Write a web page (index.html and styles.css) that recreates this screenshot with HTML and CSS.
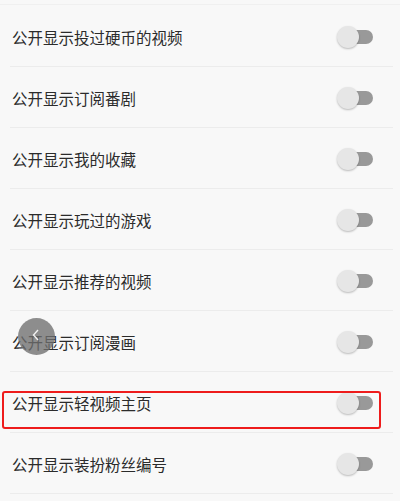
FILE: index.html
```html
<!DOCTYPE html>
<html lang="zh">
<head>
<meta charset="utf-8">
<link rel="stylesheet" href="styles.css">
</head>
<body>
<div class="list">
  <div class="row"><span class="label">公开显示投过硬币的视频</span><span class="switch"><span class="track"></span><span class="thumb"></span></span></div>
  <div class="row"><span class="label">公开显示订阅番剧</span><span class="switch"><span class="track"></span><span class="thumb"></span></span></div>
  <div class="row"><span class="label">公开显示我的收藏</span><span class="switch"><span class="track"></span><span class="thumb"></span></span></div>
  <div class="row"><span class="label">公开显示玩过的游戏</span><span class="switch"><span class="track"></span><span class="thumb"></span></span></div>
  <div class="row"><span class="label">公开显示推荐的视频</span><span class="switch"><span class="track"></span><span class="thumb"></span></span></div>
  <div class="row"><span class="label">公开显示订阅漫画</span><span class="switch"><span class="track"></span><span class="thumb"></span></span>
    <span class="back"><svg width="10" height="12" viewBox="0 0 10 12"><path d="M7 1 L2.5 6 L7 11" fill="none" stroke="#f2f2f2" stroke-width="1.4"/></svg></span>
  </div>
  <div class="row"><span class="label">公开显示轻视频主页</span><span class="switch"><span class="track"></span><span class="thumb"></span></span><span class="highlight"></span></div>
  <div class="row"><span class="label">公开显示装扮粉丝编号</span><span class="switch"><span class="track"></span><span class="thumb"></span></span></div>
</div>
</body>
</html>
```
FILE: styles.css
```css
html, body {
  margin: 0;
  padding: 0;
  background: #f8f8f8;
}
body {
  font-family: "Noto Sans CJK SC", "Noto Sans", sans-serif;
  color: #2b2b2b;
}
.list {
  padding-top: 5px;
  border-top: 1px solid #f0f0f0;
  margin-top: 4px;
}
.row {
  position: relative;
  height: 61px;
  display: flex;
  align-items: center;
  padding: 2px 0 0 2px;
  box-sizing: border-box;
  margin-left: 10px;
  margin-right: 7px;
  border-bottom: 1px solid #ececec;
}
.row:first-child { margin-top: -4px; }
.label {
  font-size: 15.5px;
  flex: 1;
}
.switch {
  position: relative;
  width: 36px;
  height: 24px;
  margin-right: 20px;
}
.track {
  position: absolute;
  left: 2px;
  right: 0;
  top: 5px;
  height: 14px;
  border-radius: 7px;
  background: #999;
}
.thumb {
  position: absolute;
  left: 0;
  top: 1px;
  width: 22px;
  height: 22px;
  border-radius: 50%;
  background: #e6e6e6;
  box-shadow: 0 1px 2px rgba(0,0,0,0.25);
}
.back {
  position: absolute;
  left: 8px;
  top: 7px;
  width: 37px;
  height: 37px;
  border-radius: 50%;
  background: rgba(110,110,110,0.78);
  display: flex;
  align-items: center;
  justify-content: center;
}
.back svg { margin-top: -4px; margin-left: -2px; }
.highlight {
  position: absolute;
  left: -8px;
  right: 12px;
  top: 19px;
  height: 38px;
  border: 2px solid #ee1c1c;
  border-radius: 3px;
  box-sizing: border-box;
}
```
